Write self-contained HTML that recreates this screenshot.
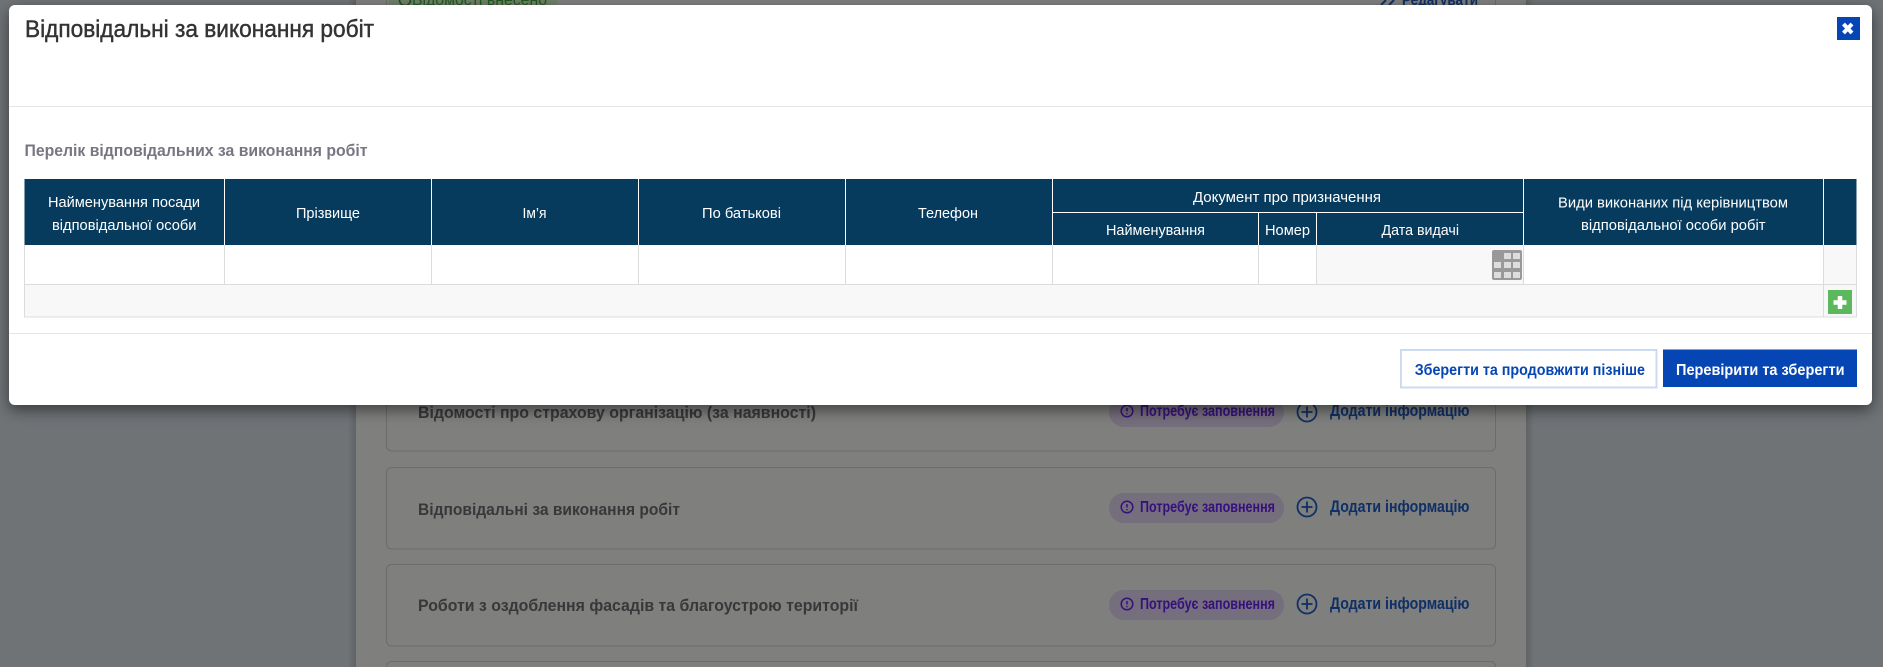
<!DOCTYPE html>
<html lang="uk">
<head>
<meta charset="utf-8">
<title>Відповідальні за виконання робіт</title>
<style>
html,body{margin:0;padding:0;width:1883px;height:667px;overflow:hidden;background:#6f7376}
svg{display:block;position:absolute;left:0;top:0;width:1883px;height:667px;overflow:hidden}
text{font-family:"Liberation Sans","DejaVu Sans",sans-serif}
.h{fill:#fff;font-size:15.2px}
.bg{fill:#38383a;font-size:17px;font-weight:700}
.pill{fill:#37107f;font-size:16px;font-weight:700}
.add{fill:#0f2f66;font-size:16.5px;font-weight:700}
.btn{font-size:16px;font-weight:700}
</style>
</head>
<body>
<svg width="1883" height="667" viewBox="0 0 1883 667" xmlns="http://www.w3.org/2000/svg">
<defs>
<filter id="s" x="-1%" y="-5%" width="102%" height="115%"><feDropShadow dx="0" dy="5" stdDeviation="7.5" flood-color="#000" flood-opacity=".5"/></filter>
<linearGradient id="gl" x1="0" x2="1" y1="0" y2="0"><stop offset="0" stop-color="#000" stop-opacity="0"/><stop offset="1" stop-color="#000" stop-opacity=".14"/></linearGradient>
<linearGradient id="gr" x1="0" x2="1" y1="0" y2="0"><stop offset="0" stop-color="#000" stop-opacity=".14"/><stop offset="1" stop-color="#000" stop-opacity="0"/></linearGradient>
</defs>
<!-- dimmed page -->
<rect width="1883" height="667" fill="#6f7376"/>
<rect x="348" y="0" width="8" height="667" fill="url(#gl)"/>
<rect x="1526" y="0" width="8" height="667" fill="url(#gr)"/>
<rect x="356" y="0" width="1170" height="667" fill="#7f7f7e"/>
<path d="M386.500 0v8h1109V0" fill="none" stroke="#6c6c6c"/>
<rect x="389" y="0" width="168" height="14" fill="#6f8068"/>
<circle cx="405" cy="0" r="5.500" fill="none" stroke="#174d17" stroke-width="1.500"/>
<text x="412" y="5" font-size="16" fill="#205a20" textLength="135" lengthAdjust="spacingAndGlyphs">Відомості внесено</text>
<path d="M1381 5l5-5M1389 5l5-5" stroke="#0f2f66" stroke-width="2" fill="none"/>
<text x="1402" y="5" font-size="16" font-weight="700" fill="#0f2f66" textLength="76" lengthAdjust="spacingAndGlyphs">Редагувати</text>
<rect x="386.500" y="370" width="1109" height="81" rx="5" fill="none" stroke="#6c6c6c"/>
<rect x="386.500" y="467.500" width="1109" height="81.500" rx="5" fill="none" stroke="#6c6c6c"/>
<rect x="386.500" y="564.500" width="1109" height="81.500" rx="5" fill="none" stroke="#6c6c6c"/>
<path d="M386.500 667v-0.500a5 5 0 0 1 5-5h1099a5 5 0 0 1 5 5v0.500" fill="none" stroke="#6c6c6c"/>
<text class="bg" x="418" y="418" textLength="398" lengthAdjust="spacingAndGlyphs">Відомості про страхову організацію (за наявності)</text>
<text class="bg" x="418" y="515" textLength="262" lengthAdjust="spacingAndGlyphs">Відповідальні за виконання робіт</text>
<text class="bg" x="418" y="611" textLength="440" lengthAdjust="spacingAndGlyphs">Роботи з оздоблення фасадів та благоустрою території</text>
<!-- row statuses -->
<g>
<rect x="1109" y="397" width="175" height="30" rx="15" fill="#756e7c"/>
<circle cx="1127" cy="411" r="5.800" fill="none" stroke="#37107f" stroke-width="1.500"/>
<path d="M1127 408v3.500M1127 413v1.200" stroke="#37107f" stroke-width="1.500" fill="none"/>
<text class="pill" x="1140" y="416" textLength="135" lengthAdjust="spacingAndGlyphs">Потребує заповнення</text>
<circle cx="1307" cy="412" r="9.500" fill="none" stroke="#0f2f66" stroke-width="1.800"/>
<path d="M1301.500 412h11M1307 406.500v11" stroke="#0f2f66" stroke-width="1.800" fill="none"/>
<text class="add" x="1330" y="416" textLength="139.500" lengthAdjust="spacingAndGlyphs">Додати інформацію</text>
</g>
<g>
<rect x="1109" y="493" width="175" height="30" rx="15" fill="#756e7c"/>
<circle cx="1127" cy="507" r="5.800" fill="none" stroke="#37107f" stroke-width="1.500"/>
<path d="M1127 504v3.500M1127 509v1.200" stroke="#37107f" stroke-width="1.500" fill="none"/>
<text class="pill" x="1140" y="512" textLength="135" lengthAdjust="spacingAndGlyphs">Потребує заповнення</text>
<circle cx="1307" cy="507" r="9.500" fill="none" stroke="#0f2f66" stroke-width="1.800"/>
<path d="M1301.500 507h11M1307 501.500v11" stroke="#0f2f66" stroke-width="1.800" fill="none"/>
<text class="add" x="1330" y="512" textLength="139.500" lengthAdjust="spacingAndGlyphs">Додати інформацію</text>
</g>
<g>
<rect x="1109" y="590" width="175" height="30" rx="15" fill="#756e7c"/>
<circle cx="1127" cy="604" r="5.800" fill="none" stroke="#37107f" stroke-width="1.500"/>
<path d="M1127 601v3.500M1127 606v1.200" stroke="#37107f" stroke-width="1.500" fill="none"/>
<text class="pill" x="1140" y="609" textLength="135" lengthAdjust="spacingAndGlyphs">Потребує заповнення</text>
<circle cx="1307" cy="604" r="9.500" fill="none" stroke="#0f2f66" stroke-width="1.800"/>
<path d="M1301.500 604h11M1307 598.500v11" stroke="#0f2f66" stroke-width="1.800" fill="none"/>
<text class="add" x="1330" y="609" textLength="139.500" lengthAdjust="spacingAndGlyphs">Додати інформацію</text>
</g>
<!-- modal -->
<rect x="9" y="5" width="1863" height="400" rx="6" fill="#fff" filter="url(#s)"/>
<text x="25" y="37" font-size="24" fill="#333" stroke="#333" stroke-width=".45" textLength="349" lengthAdjust="spacingAndGlyphs">Відповідальні за виконання робіт</text>
<rect x="1837" y="17" width="23" height="23" fill="#0645b4"/>
<path d="M1843.500 24l8.500 9M1852 24l-8.500 9" stroke="#fff" stroke-width="4" fill="none"/>
<rect x="9" y="106" width="1863" height="1" fill="#e5e5e5"/>
<text x="24.500" y="156" font-size="16.700" font-weight="700" fill="#777783" textLength="343" lengthAdjust="spacingAndGlyphs">Перелік відповідальних за виконання робіт</text>
<!-- table -->
<rect x="24.500" y="179" width="1832" height="66" fill="#063b5e"/>
<rect x="24.500" y="245" width="1832" height="39" fill="#fff"/>
<rect x="1316.500" y="245" width="206.500" height="39" fill="#f8f8f8"/>
<rect x="1823.500" y="245" width="33" height="39" fill="#f8f8f8"/>
<rect x="24.500" y="284" width="1832" height="33" fill="#f8f8f8"/>
<path d="M224.500 179v66M431.500 179v66M638.500 179v66M845.500 179v66M1052.500 179v66M1523.500 179v66M1823.500 179v66M1258.500 212v33M1316.500 212v33M1052.500 212.500h471" stroke="#fff" stroke-width="1" fill="none"/>
<path d="M224.500 245v39M431.500 245v39M638.500 245v39M845.500 245v39M1052.500 245v39M1258.500 245v39M1316.500 245v39M1523.500 245v39M1823.500 245v72M24.500 245v72M1856.500 245v72M24 284.500h1833M24 317h1833" stroke="#dcdcdc" stroke-width="1" fill="none"/>
<text class="h" x="48" y="207" textLength="152" lengthAdjust="spacingAndGlyphs">Найменування посади</text>
<text class="h" x="52" y="230" textLength="144.500" lengthAdjust="spacingAndGlyphs">відповідальної особи</text>
<text class="h" x="296" y="218" textLength="64" lengthAdjust="spacingAndGlyphs">Прізвище</text>
<text class="h" x="522.500" y="218" textLength="24" lengthAdjust="spacingAndGlyphs">Ім’я</text>
<text class="h" x="702" y="218" textLength="79" lengthAdjust="spacingAndGlyphs">По батькові</text>
<text class="h" x="918" y="218" textLength="60" lengthAdjust="spacingAndGlyphs">Телефон</text>
<text class="h" x="1193" y="202" textLength="188" lengthAdjust="spacingAndGlyphs">Документ про призначення</text>
<text class="h" x="1106" y="235" textLength="99" lengthAdjust="spacingAndGlyphs">Найменування</text>
<text class="h" x="1265" y="235" textLength="45" lengthAdjust="spacingAndGlyphs">Номер</text>
<text class="h" x="1381.500" y="235" textLength="77.500" lengthAdjust="spacingAndGlyphs">Дата видачі</text>
<text class="h" x="1558" y="207.500" textLength="230" lengthAdjust="spacingAndGlyphs">Види виконаних під керівництвом</text>
<text class="h" x="1581" y="230" textLength="184.500" lengthAdjust="spacingAndGlyphs">відповідальної особи робіт</text>
<!-- calendar icon -->
<rect x="1492" y="250" width="30" height="30" rx="2" fill="#999"/>
<g fill="#ddd">
<rect x="1504" y="253" width="7" height="6"/><rect x="1513" y="253" width="7" height="6"/>
<rect x="1494" y="262" width="7" height="6"/><rect x="1504" y="262" width="7" height="6"/><rect x="1513" y="262" width="7" height="6"/>
<rect x="1494" y="272" width="7" height="6"/><rect x="1504" y="272" width="7" height="6"/><rect x="1513" y="272" width="7" height="6"/>
</g>
<!-- plus -->
<rect x="1828" y="290" width="24" height="24" fill="#5cb85c"/>
<path d="M1840 296v13M1833.500 302.500h13" stroke="#fff" stroke-width="4.500" fill="none"/>
<rect x="9" y="333" width="1863" height="1" fill="#e5e5e5"/>
<!-- buttons -->
<rect x="1401" y="350" width="255.500" height="37.500" fill="#fff" stroke="#cddbf0" stroke-width="2"/>
<text class="btn" x="1414.700" y="375" fill="#0645b4" textLength="230.300" lengthAdjust="spacingAndGlyphs">Зберегти та продовжити пізніше</text>
<rect x="1663" y="349.500" width="194" height="37.500" fill="#0645b4"/>
<text class="btn" x="1676" y="375" fill="#fff" textLength="168.500" lengthAdjust="spacingAndGlyphs">Перевірити та зберегти</text>
</svg>
</body>
</html>
